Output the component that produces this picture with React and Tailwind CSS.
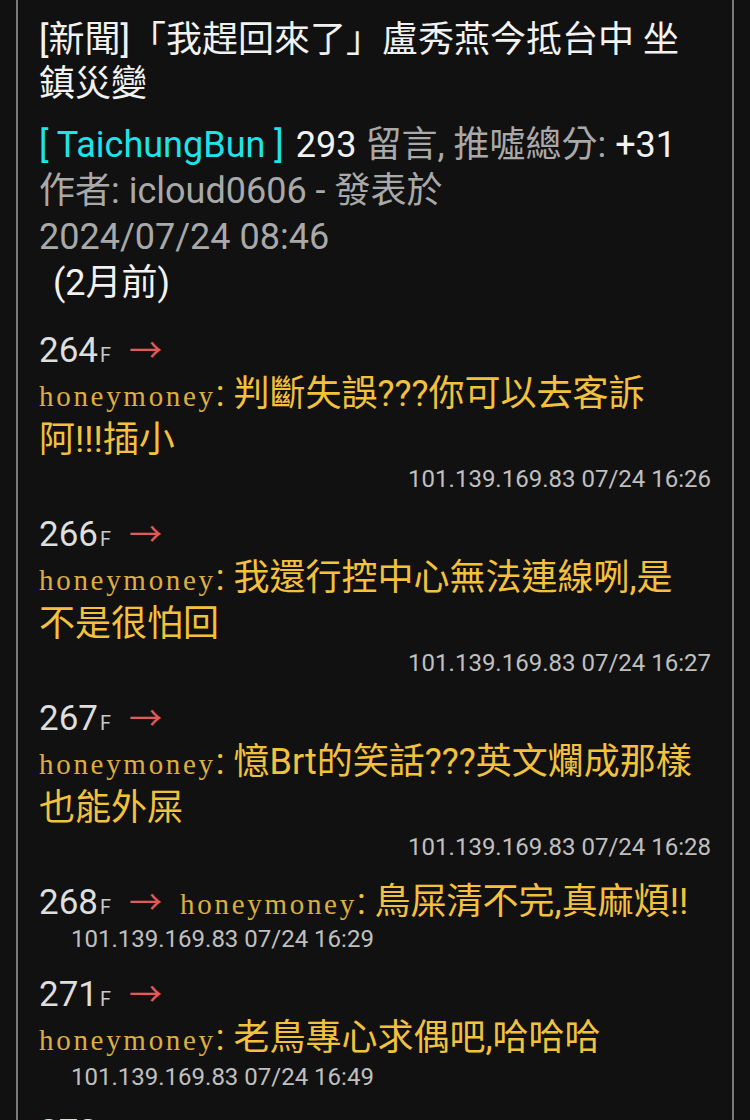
import React from "react";

const sans = "font-['Roboto','Noto_Sans_CJK_TC',sans-serif]";

const floors = [
  {
    no: "264",
    lines: ["判斷失誤???你可以去客訴", "阿!!!插小"],
    ip: "101.139.169.83 07/24 16:26",
    mode: "right",
  },
  {
    no: "266",
    lines: ["我還行控中心無法連線咧,是", "不是很怕回"],
    ip: "101.139.169.83 07/24 16:27",
    mode: "right",
  },
  {
    no: "267",
    lines: ["憶Brt的笑話???英文爛成那樣", "也能外屎"],
    ip: "101.139.169.83 07/24 16:28",
    mode: "right",
  },
  {
    no: "268",
    lines: ["鳥屎清不完,真麻煩!!"],
    ip: "101.139.169.83 07/24 16:29",
    mode: "inline",
  },
  {
    no: "271",
    lines: ["老鳥專心求偶吧,哈哈哈"],
    ip: "101.139.169.83 07/24 16:49",
    mode: "left",
  },
  { no: "272", lines: [], ip: "", mode: "stub" },
];

function FloorHead({ no }) {
  return (
    <span className="inline-flex items-baseline">
      <span className="text-[35px] text-[#dedede]">{no}</span>
      <span className="text-[20px] text-[#c8c8c8] ml-[2px]">F</span>
      <span className="text-[#e25b5b] ml-[18px] font-['Noto_Sans_CJK_TC',sans-serif] text-[33px]">→</span>
    </span>
  );
}

function User({ text }) {
  return (
    <>
      <span className="font-['Liberation_Serif',serif] text-[29px] tracking-[2.7px] text-[#dcae3f]">honeymoney</span>
      <span className="text-[#f4c13c]">: {text}</span>
    </>
  );
}

function Floor({ f }) {
  if (f.mode === "stub") {
    return (
      <div className="h-[46px] leading-[46px]">
        <FloorHead no={f.no} />
      </div>
    );
  }
  return (
    <div className="mb-[14px]">
      {f.mode === "inline" ? (
        <div className="h-[46px] leading-[46px] whitespace-nowrap">
          <FloorHead no={f.no} />
          <span className="ml-[18px]">
            <User text={f.lines[0]} />
          </span>
        </div>
      ) : (
        <>
          <div className="h-[46px] leading-[46px]">
            <FloorHead no={f.no} />
          </div>
          <div className="h-[46px] leading-[46px] whitespace-nowrap">
            <User text={f.lines[0]} />
          </div>
          {f.lines.slice(1).map((l, i) => (
            <div key={i} className="h-[46px] leading-[46px] whitespace-nowrap text-[#f4c13c]">
              {l}
            </div>
          ))}
        </>
      )}
      <div
        className={
          "h-[32px] leading-[32px] text-[24px] text-[#c0c0c0] whitespace-nowrap " +
          (f.mode === "right" ? "text-right" : "pl-[32px]")
        }
      >
        {f.ip}
      </div>
    </div>
  );
}

export default function App() {
  return (
    <div className={"w-[750px] h-[1120px] overflow-hidden bg-[#111111] " + sans}>
      <div className="mx-[16px] h-full border-x-2 border-[#7a7a7a] px-[21px] pt-[18px] text-[36px] overflow-hidden">
        {/* title */}
        <div className="leading-[44px] text-[#f2f2f2] whitespace-nowrap">
          <div>[新聞]「我趕回來了」盧秀燕今抵台中 坐</div>
          <div>鎮災變</div>
        </div>

        {/* meta */}
        <div className="mt-[16px] leading-[46px] whitespace-nowrap">
          <div>
            <span className="text-[#1fe3ea]">[ TaichungBun ]</span>
            <span className="text-[#f2f2f2] ml-[12px]">293</span>
            <span className="text-[#a9a9a9]"> 留言, 推噓總分: </span>
            <span className="text-[#f2f2f2]">+31</span>
          </div>
          <div className="text-[#a9a9a9]">作者: icloud0606 - 發表於</div>
          <div className="text-[#a9a9a9]">2024/07/24 08:46</div>
          <div className="text-[#f2f2f2] pl-[14px]">(2月前)</div>
        </div>

        <div className="mt-[19px]">
          {floors.map((f) => (
            <Floor key={f.no} f={f} />
          ))}
        </div>
      </div>
    </div>
  );
}
